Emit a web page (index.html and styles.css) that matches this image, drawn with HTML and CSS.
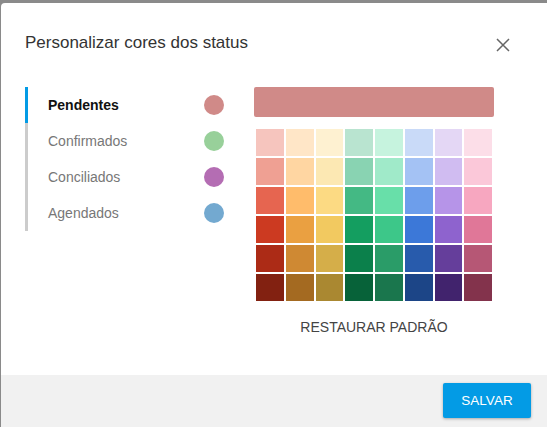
FILE: index.html
```html
<!DOCTYPE html>
<html lang="pt-BR">
<head>
    <meta charset="UTF-8">
    <meta name="viewport" content="width=device-width, initial-scale=1.0">
    <title>Personalizar cores dos status</title>
    <link rel="stylesheet" href="styles.css">
</head>
<body>
    <div class="dialog">
        <div class="dialog-header">
            <h2 class="dialog-title">Personalizar cores dos status</h2>
            <span class="close-btn">
                <svg width="14" height="14" viewBox="0 0 14 14"><path d="M1 1 L13 13 M13 1 L1 13" stroke="#666" stroke-width="1.5" fill="none"/></svg>
            </span>
        </div>

        <div class="dialog-body">
            <ul class="status-list">
                <li class="status-item active"><span>Pendentes</span><span class="dot" style="background:#d08a88"></span></li>
                <li class="status-item"><span>Confirmados</span><span class="dot" style="background:#98d09a"></span></li>
                <li class="status-item"><span>Conciliados</span><span class="dot" style="background:#b46db3"></span></li>
                <li class="status-item"><span>Agendados</span><span class="dot" style="background:#73a9d0"></span></li>
            </ul>

            <div class="picker">
                <div class="preview"></div>
                <div class="palette" id="palette"></div>
                <div class="reset">RESTAURAR PADRÃO</div>
            </div>
        </div>

        <div class="dialog-footer">
            <span class="save-btn">SALVAR</span>
        </div>
    </div>

    <script>
        const colors = [
            "#f6c5be", "#ffe6c7", "#fef1d1", "#b9e4d0", "#c6f3de", "#c9daf8", "#e4d7f5", "#fcdee8",
            "#efa093", "#ffd6a2", "#fce8b3", "#89d3b2", "#a0eac9", "#a4c2f4", "#d0bcf1", "#fbc8d9",
            "#e66550", "#ffbc6b", "#fcda83", "#44b984", "#68dfa9", "#6d9eeb", "#b694e8", "#f7a7c0",
            "#cc3a21", "#eaa041", "#f2c960", "#149e60", "#3dc789", "#3c78d8", "#8e63ce", "#e07798",
            "#ac2b16", "#cf8933", "#d5ae49", "#0b804b", "#2a9c68", "#285bac", "#653e9b", "#b65775",
            "#822111", "#a46a21", "#aa8831", "#076239", "#1a764d", "#1c4587", "#41236d", "#83334c"
        ];

        document.getElementById("palette").innerHTML = colors
            .map(c => `<span class="swatch" style="background:${c}"></span>`)
            .join("");
    </script>
</body>
</html>
```

FILE: styles.css
```css
body { margin: 0; padding: 3px 0 0 1px; background: #8a8a8a; font-family: "Liberation Sans", Arial, sans-serif; overflow: hidden; }
.dialog { background: #fff; border-top-left-radius: 4px; width: 546px; height: 430px; display: flex; flex-direction: column; }
.dialog-header { display: flex; justify-content: space-between; align-items: center; padding: 30px 37px 0 24px; }
.dialog-title { margin: 0; font-size: 17px; font-weight: normal; line-height: 20px; color: #333; }
.close-btn { display: flex; margin-top: 3px; cursor: pointer; }
.dialog-body { display: flex; gap: 30px; padding: 34px 0 38px 24px; }
.status-list { list-style: none; margin: 0; padding: 0; width: 199px; }
.status-item { display: flex; justify-content: space-between; align-items: center; height: 36px; padding-left: 20px; border-left: 3px solid #ccc; font-size: 14px; color: #777; cursor: pointer; }
.status-item.active { border-left-color: #039be5; color: #111; font-weight: bold; }
.dot { width: 20px; height: 20px; border-radius: 50%; }
.picker { width: 240px; display: flex; flex-direction: column; }
.preview { height: 30px; border-radius: 2px; background: #d08a88; }
.palette { display: grid; grid-template-columns: repeat(8, 1fr); grid-auto-rows: 27px; gap: 2px; margin: 12px 2px 0; }
.swatch { display: block; cursor: pointer; }
.reset { margin-top: 16px; line-height: 20px; font-size: 14px; color: #444; text-align: center; cursor: pointer; }
.dialog-footer { flex: 1; background: #f1f1f1; display: flex; justify-content: flex-end; align-items: flex-start; padding: 8px 16px 0 0; }
.save-btn { background: #039be5; color: #fff; font-size: 13.5px; width: 88px; height: 35px; line-height: 35px; text-align: center; border-radius: 2px; box-shadow: 0 1px 3px rgba(0,0,0,0.3); cursor: pointer; }
```
